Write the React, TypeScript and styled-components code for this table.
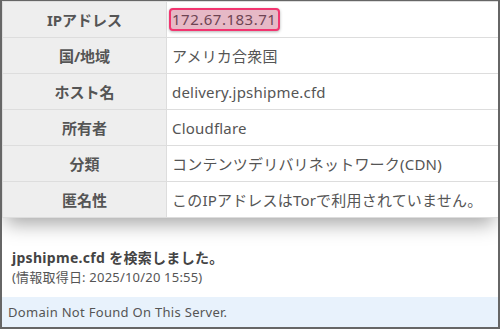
import React from 'react';
import styled, { createGlobalStyle } from 'styled-components';

const GlobalStyle = createGlobalStyle`
  html, body {
    margin: 0;
    padding: 0;
    background: #ffffff;
  }
  body {
    font-family: "Noto Sans", "Noto Sans CJK JP", sans-serif;
    color: #555555;
  }
`;

type Row = { label: string; value: string; highlight?: boolean };

const rows: Row[] = [
  { label: 'IPアドレス', value: '172.67.183.71', highlight: true },
  { label: '国/地域', value: 'アメリカ合衆国' },
  { label: 'ホスト名', value: 'delivery.jpshipme.cfd' },
  { label: '所有者', value: 'Cloudflare' },
  { label: '分類', value: 'コンテンツデリバリネットワーク(CDN)' },
  { label: '匿名性', value: 'このIPアドレスはTorで利用されていません。' },
];

export default function App() {
  return (
    <>
      <GlobalStyle />
      <Frame>
        <InfoTable>
          {rows.map((row) => (
            <React.Fragment key={row.label}>
              <LabelCell>{row.label}</LabelCell>
              <ValueCell>
                {row.highlight ? <IpBadge>{row.value}</IpBadge> : row.value}
              </ValueCell>
            </React.Fragment>
          ))}
        </InfoTable>
        <Summary>
          <SearchedText>jpshipme.cfd を検索しました。</SearchedText>
          <FetchedDate>(情報取得日: 2025/10/20 15:55)</FetchedDate>
        </Summary>
        <Notice>Domain Not Found On This Server.</Notice>
      </Frame>
    </>
  );
}

const Frame = styled.div`
  box-sizing: border-box;
  width: 500px;
  height: 329px;
  border-style: solid;
  border-color: #666666;
  border-width: 1px 2px 2px 2px;
  display: flex;
  flex-direction: column;
  overflow: hidden;
`;

const InfoTable = styled.div`
  display: grid;
  grid-template-columns: 164px 1fr;
  border-top: 1px solid #dddddd;
  border-left: 1px solid #dddddd;
  box-shadow: 0 10px 18px -4px rgba(0, 0, 0, 0.35);
  background: #ffffff;
`;

const LabelCell = styled.div`
  box-sizing: border-box;
  height: 36px;
  display: flex;
  align-items: center;
  justify-content: center;
  background: #eeeeee;
  border-right: 1px solid #dddddd;
  border-bottom: 1px solid #dddddd;
  font-weight: 700;
  font-size: 15px;
  color: #555555;
`;

const ValueCell = styled.div`
  box-sizing: border-box;
  height: 36px;
  display: flex;
  align-items: center;
  padding-left: 5px;
  border-bottom: 1px solid #dddddd;
  font-size: 15px;
  letter-spacing: 0.2px;
  color: #555555;
  white-space: nowrap;
`;

const IpBadge = styled.span`
  display: inline-block;
  margin-left: -3px;
  padding: 0 2px 0 1px;
  line-height: 19px;
  letter-spacing: 0.5px;
  border: 2px solid #f2346f;
  border-radius: 4px;
  background: #e6b9c6;
  color: #6e4453;
  box-shadow: 0 1px 3px rgba(0, 0, 0, 0.3);
`;

const Summary = styled.div`
  flex: 1;
  display: flex;
  flex-direction: column;
  justify-content: flex-end;
  padding: 0 0 11px 10px;
`;

const SearchedText = styled.div`
  font-weight: 700;
  font-size: 14px;
  line-height: 20px;
  letter-spacing: 0.3px;
  color: #444444;
`;

const FetchedDate = styled.div`
  font-size: 13px;
  line-height: 18px;
  letter-spacing: 0.2px;
  color: #555555;
`;

const Notice = styled.div`
  height: 30px;
  display: flex;
  align-items: center;
  padding-left: 6px;
  background: #e8f2fc;
  font-size: 13px;
  letter-spacing: 0.3px;
  color: #555555;
`;
